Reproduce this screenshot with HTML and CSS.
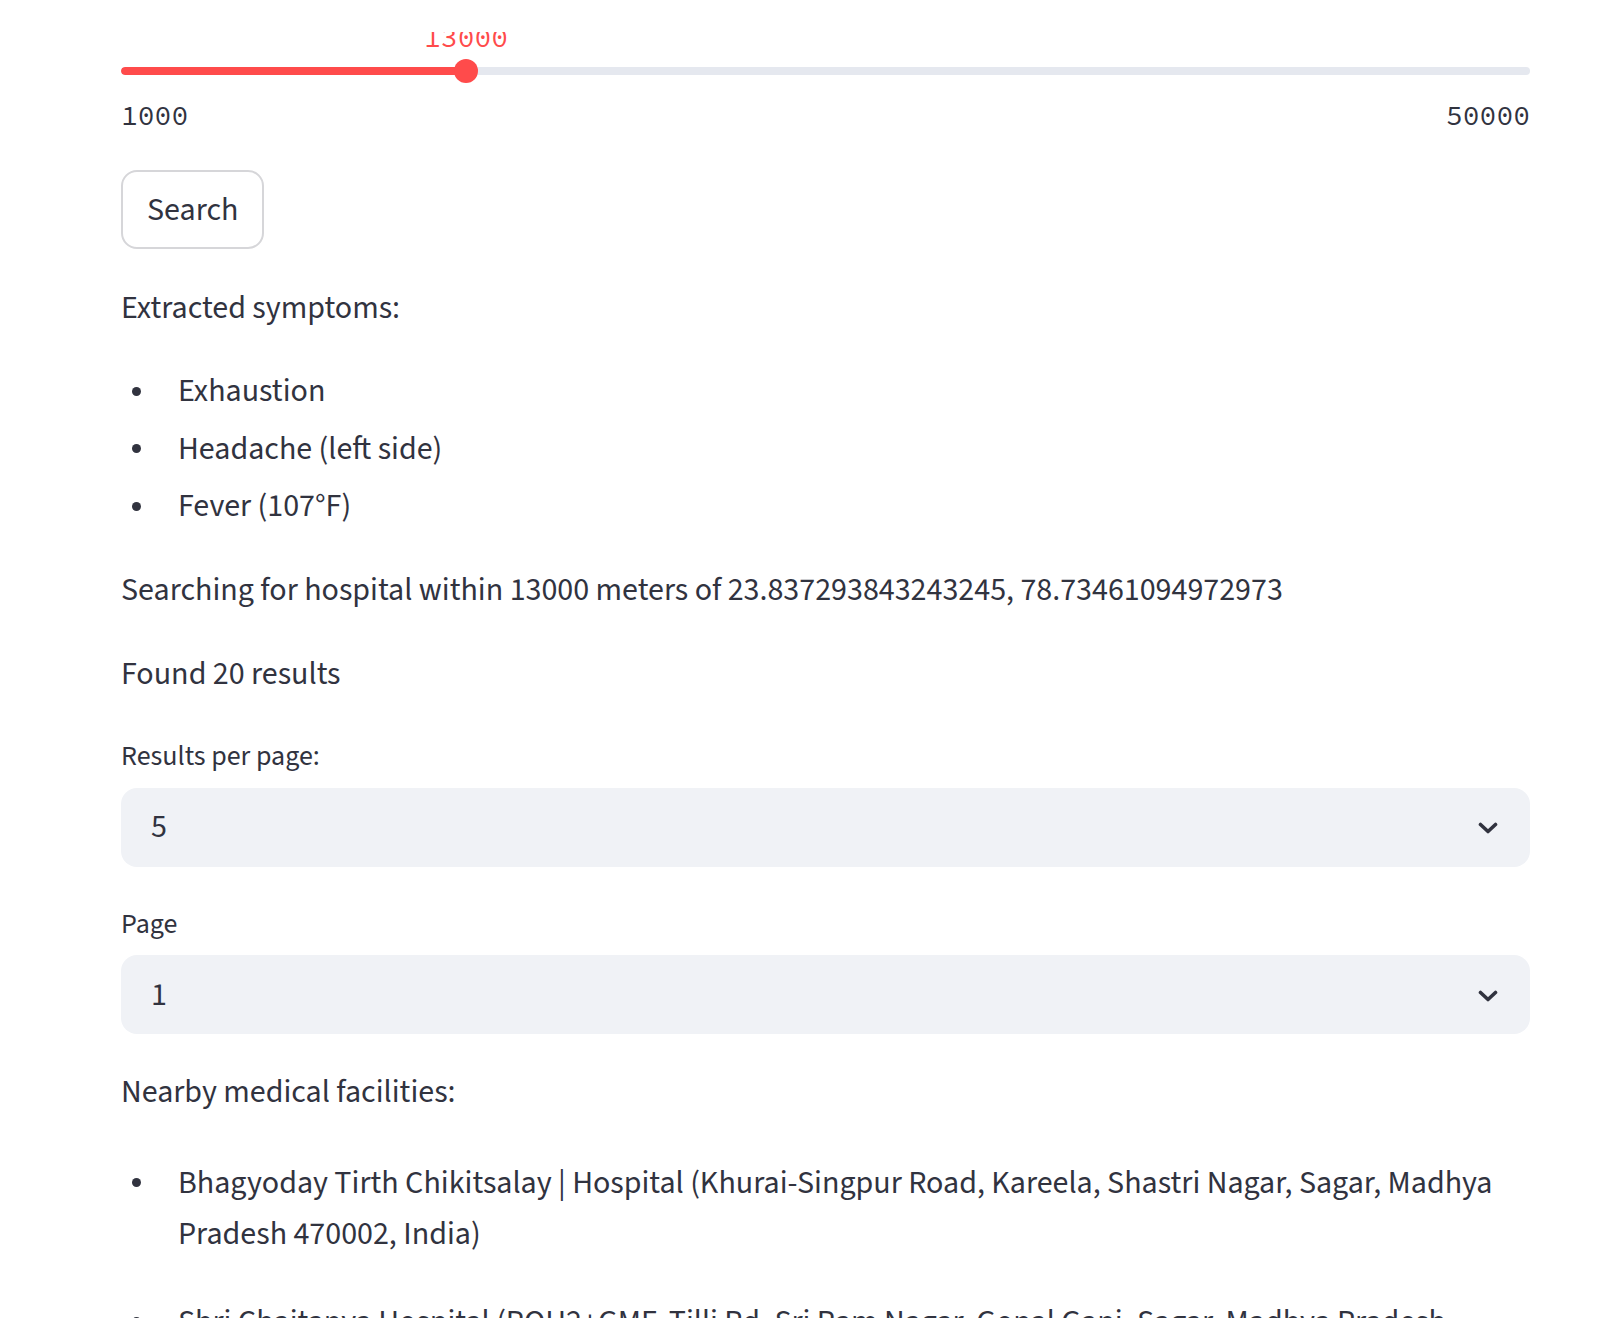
FILE: index.html
```html
<!DOCTYPE html>
<html lang="en">
<head>
<meta charset="utf-8">
<title>Hospital search</title>
<link rel="stylesheet" href="styles.css">
</head>
<body>
<header class="topbar"></header>
<main class="main">
  <div class="slider">
    <div class="slider-area">
      <div class="track"><div class="fill" style="width:24.49%"></div></div>
      <div class="thumb" style="left:24.49%"><span class="thumb-value">13000</span></div>
    </div>
    <div class="ticks"><span>1000</span><span>50000</span></div>
  </div>

  <button class="btn" type="button">Search</button>

  <p class="text extracted">Extracted symptoms:</p>
  <ul class="list symptoms">
    <li>Exhaustion</li>
    <li>Headache (left side)</li>
    <li>Fever (107°F)</li>
  </ul>

  <p class="text searching">Searching for hospital within 13000 meters of 23.837293843243245, 78.73461094972973</p>
  <p class="text found">Found 20 results</p>

  <div class="field field-first">
    <label class="field-label">Results per page:</label>
    <div class="select">
      <span class="select-value">5</span>
      <svg class="chev" width="20" height="12" viewBox="0 0 20 12"><polyline points="2.5,2.5 10,9.5 17.5,2.5" fill="none" stroke="#31333F" stroke-width="3.6" stroke-linecap="round" stroke-linejoin="round"/></svg>
    </div>
  </div>

  <div class="field field-second">
    <label class="field-label">Page</label>
    <div class="select">
      <span class="select-value">1</span>
      <svg class="chev" width="20" height="12" viewBox="0 0 20 12"><polyline points="2.5,2.5 10,9.5 17.5,2.5" fill="none" stroke="#31333F" stroke-width="3.6" stroke-linecap="round" stroke-linejoin="round"/></svg>
    </div>
  </div>

  <p class="text nearby">Nearby medical facilities:</p>
  <ul class="list facilities">
    <li>Bhagyoday Tirth Chikitsalay | Hospital (Khurai-Singpur Road, Kareela, Shastri Nagar, Sagar, Madhya Pradesh 470002, India)</li>
    <li>Shri Chaitanya Hospital (PQH2+GMF, Tilli Rd, Sri Ram Nagar, Gopal Ganj, Sagar, Madhya Pradesh 470002, India)</li>
  </ul>
</main>
</body>
</html>
```
FILE: styles.css
```css
html, body {
  margin: 0;
  padding: 0;
  background: #ffffff;
}
body {
  font-family: "Source Sans 3", "Source Sans Pro", "Lato", sans-serif;
  font-size: 32px;
  line-height: 51.2px;
  color: #31333F;
  overflow: hidden;
}
.topbar {
  position: fixed;
  top: 0;
  left: 0;
  right: 0;
  height: 32px;
  background: #ffffff;
  z-index: 10;
}
.main {
  margin-left: 121px;
  width: 1409px;
  display: flex;
  flex-direction: column;
  align-items: flex-start;
}

/* slider */
.slider {
  width: 100%;
  margin-top: 59px;
}
.slider-area {
  position: relative;
  height: 24px;
  display: flex;
  align-items: center;
}
.track {
  width: 100%;
  height: 8px;
  border-radius: 4px;
  background: #e5e8ef;
  overflow: hidden;
}
.fill {
  height: 100%;
  background: #FF4B4B;
  border-radius: 4px 0 0 4px;
}
.thumb {
  position: absolute;
  top: 0;
  width: 24px;
  height: 24px;
  margin-left: -12px;
  border-radius: 50%;
  background: #FF4B4B;
}
.thumb-value {
  position: absolute;
  left: 50%;
  top: -36px;
  transform: translateX(-50%);
  font-family: "Source Code Pro", "DejaVu Sans Mono", monospace;
  font-size: 28px;
  line-height: 28px;
  color: #FF4B4B;
  white-space: nowrap;
}
.ticks {
  display: flex;
  justify-content: space-between;
  margin-top: 18px;
  font-family: "Source Code Pro", "DejaVu Sans Mono", monospace;
  font-size: 28px;
  line-height: 28px;
  color: #31333F;
}

/* button */
.btn {
  margin-top: 41px;
  height: 79px;
  padding: 2px 24px 0;
  box-sizing: border-box;
  border: 2px solid #d6d6d9;
  border-radius: 16px;
  background: #ffffff;
  font-family: inherit;
  font-size: 32px;
  line-height: 51.2px;
  color: #31333F;
}

/* text */
.text {
  margin: 0;
}
.extracted { margin-top: 34px; }
.searching { margin-top: 33px; }
.found { margin-top: 32px; }
.nearby { margin-top: 33px; }

.list {
  list-style: none;
  margin: 0;
  padding: 0;
  width: 100%;
}
.list li {
  position: relative;
  padding-left: 57px;
}
.list li::before {
  content: "";
  position: absolute;
  left: 11px;
  top: 20.5px;
  width: 9px;
  height: 9px;
  border-radius: 50%;
  background: #31333F;
}
.symptoms { margin-top: 26px; }
.symptoms li { margin-top: 6.2px; }
.facilities { margin-top: 39px; }
.facilities li + li { margin-top: 37px; }

/* select fields */
.field {
  width: 100%;
  display: flex;
  flex-direction: column;
}
.field-first { margin-top: 34px; }
.field-second { margin-top: 35px; }
.field-label {
  font-size: 28px;
  line-height: 44.8px;
  color: #31333F;
}
.select {
  margin-top: 9px;
  height: 79px;
  box-sizing: border-box;
  background: #f0f2f6;
  border-radius: 16px;
  display: flex;
  align-items: center;
  justify-content: space-between;
  padding: 2px 32px 0 30px;
}
.select-value {
  font-size: 32px;
  line-height: 51.2px;
}
.chev {
  display: block;
}
```
